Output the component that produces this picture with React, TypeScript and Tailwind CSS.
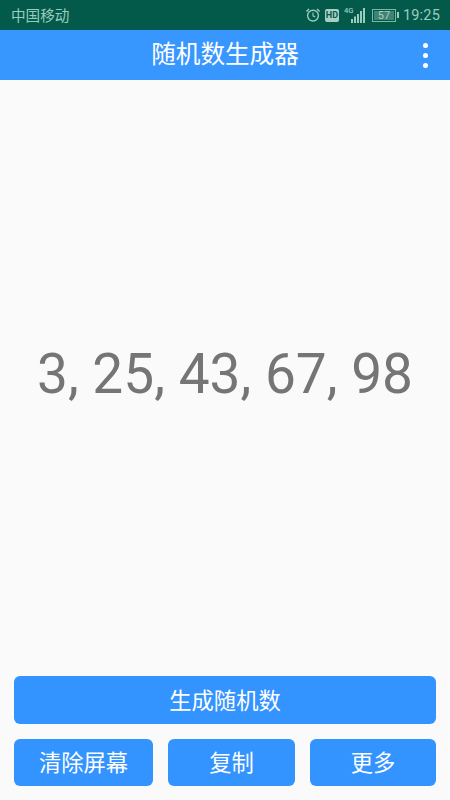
import { useState } from "react";

const cjk = "font-['Roboto','Noto_Sans_CJK_SC',sans-serif]";

function StatusIcons() {
  return (
    <div className="flex items-center text-[#9accbe]">
      {/* alarm */}
      <svg width="16" height="16" viewBox="0 0 16 16" fill="none" stroke="currentColor" className="mr-[4px]">
        <circle cx="8" cy="8.6" r="5.4" strokeWidth="1.4" />
        <path d="M8 5.6V8.8L10.2 10" strokeWidth="1.1" />
        <path d="M1.4 4.4L4 1.9M14.6 4.4L12 1.9" strokeWidth="1.4" />
      </svg>
      {/* HD */}
      <div className="w-[14px] h-[13px] mr-[5px] rounded-[2px] bg-[#a9cfc5] flex items-center justify-center text-[9px] leading-none font-bold text-[#045a4a] font-['Roboto',sans-serif]">
        HD
      </div>
      {/* signal */}
      <svg width="22" height="18" viewBox="0 0 22 18" fill="currentColor" className="mr-[6px]">
        <text x="0" y="7" fontSize="7.5" fontWeight="500" fontFamily="Roboto, sans-serif">4G</text>
        <rect x="7" y="13" width="2" height="4" />
        <rect x="10" y="10.5" width="2" height="6.5" />
        <rect x="13" y="8" width="2" height="9" />
        <rect x="16" y="5" width="2" height="12" />
        <rect x="19" y="2" width="2" height="15" />
      </svg>
      {/* battery */}
      <div className="w-[24px] h-[13px] border border-[#7fb5a6] flex items-center mr-[1px] p-px">
        <div className="w-[20px] h-full bg-[#3f8372] flex items-center justify-center text-[11px] leading-none text-[#a9cfc5] font-['Roboto',sans-serif]">
          57
        </div>
      </div>
      <div className="w-[2px] h-[6px] bg-[#9accbe] mr-[4px]" />
      <span className="text-[14.5px] leading-none font-['Roboto',sans-serif] tracking-[0.2px] pt-[2px]">19:25</span>
    </div>
  );
}

export default function App() {
  const [numbers] = useState("3, 25, 43, 67, 98");

  return (
    <div className={`w-[450px] h-[800px] bg-[#fafafa] flex flex-col overflow-hidden ${cjk}`}>
      <div className="h-[30px] bg-[#045a4a] flex items-center justify-between pl-[11px] pr-[10px]">
        <span className="text-[14.6px] leading-none text-[#9accbe] pt-[2px]">中国移动</span>
        <StatusIcons />
      </div>

      <div className="h-[50px] bg-[#3897ff] flex items-center justify-center relative">
        <span className="text-[24.6px] leading-none text-white pt-px">随机数生成器</span>
        <div className="absolute right-[22px] top-[13px] flex flex-col gap-[5px]">
          <div className="w-[5px] h-[5px] rounded-full bg-white" />
          <div className="w-[5px] h-[5px] rounded-full bg-white" />
          <div className="w-[5px] h-[5px] rounded-full bg-white" />
        </div>
      </div>

      <div className="flex-1 flex items-center justify-center pb-[8px]">
        <span className="text-[55px] leading-none text-[#757575] font-['Roboto',sans-serif]">{numbers}</span>
      </div>

      <div className="flex flex-col gap-[15px] px-[14px] pb-[14px]">
        <button className="h-[48px] pt-[3px] rounded-[6px] bg-[#3393ff] text-white text-[22.3px]">生成随机数</button>
        <div className="flex gap-[15px]">
          <button className="w-[139px] h-[47px] pt-[3px] rounded-[6px] bg-[#3393ff] text-white text-[22.3px]">清除屏幕</button>
          <button className="w-[127px] h-[47px] pt-[3px] rounded-[6px] bg-[#3393ff] text-white text-[22.3px]">复制</button>
          <button className="w-[126px] h-[47px] pt-[3px] rounded-[6px] bg-[#3393ff] text-white text-[22.3px]">更多</button>
        </div>
      </div>
    </div>
  );
}
